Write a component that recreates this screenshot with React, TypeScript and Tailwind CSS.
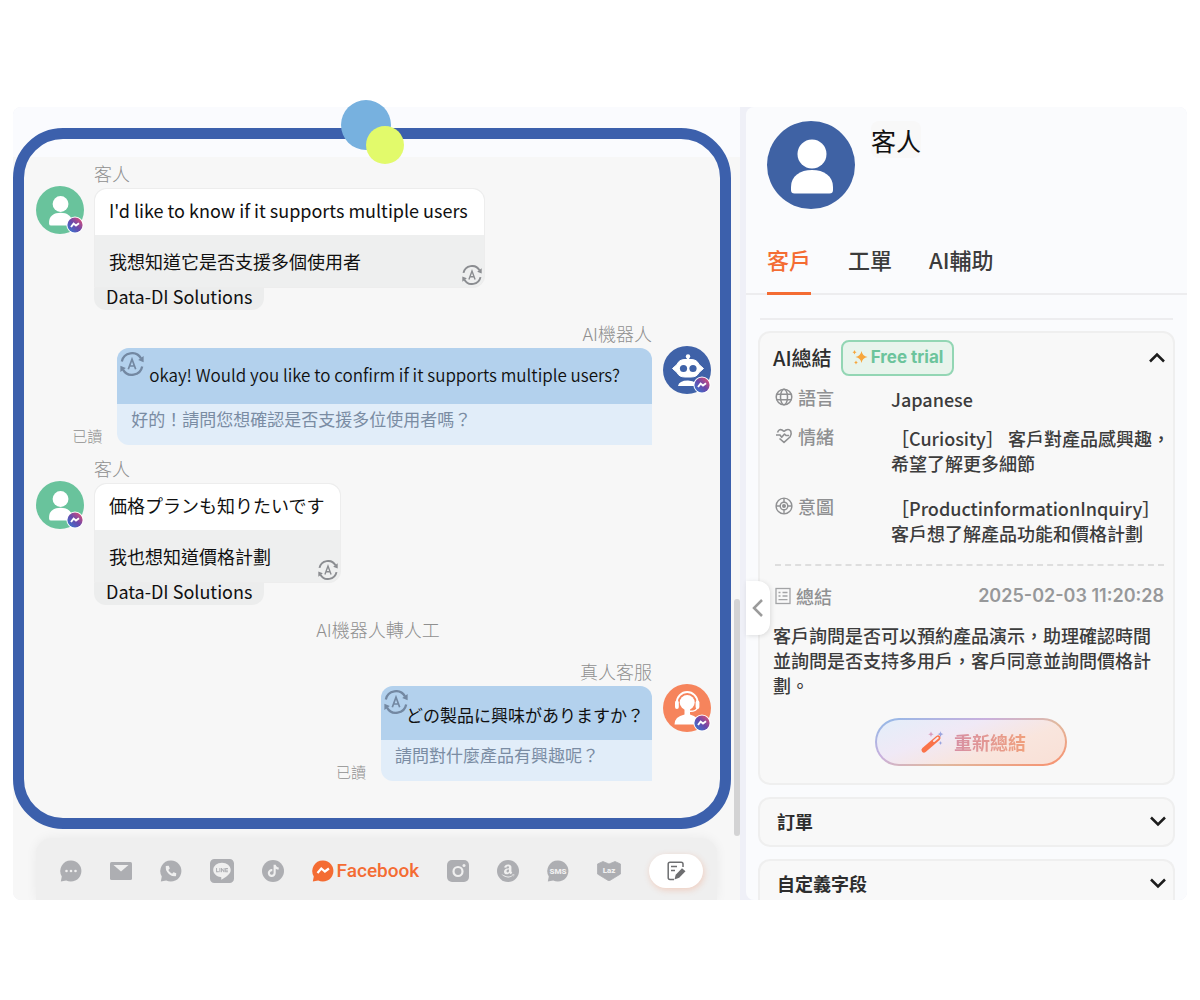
import type { ReactNode } from 'react';
import { FaAmazon, FaLine, FaPhoneAlt, FaTiktok } from 'react-icons/fa';

type IconProps = { className?: string };

/* ---------- icons ---------- */

function TranslateIcon({ className }: IconProps) {
  return (
    <svg viewBox="0 0 24 24" fill="none" stroke="currentColor" className={className}>
      <path d="M1.800 9.500A10.400 10.400 0 0 1 21 6.400" strokeWidth="2.300" />
      <path d="M22.200 14.500A10.400 10.400 0 0 1 3 17.600" strokeWidth="2.300" />
      <path d="M23.600 4v6.200l-5.400-2.200z" fill="currentColor" stroke="none" />
      <path d="M.4 20v-6.200l5.400 2.200z" fill="currentColor" stroke="none" />
      <path d="M8.300 17.300 12 7.200l3.700 10.100M9.500 14h5" strokeWidth="1.700" />
    </svg>
  );
}

function MessengerBadge() {
  return (
    <svg viewBox="0 0 18 18" className="absolute right-0 bottom-0 size-[18px]">
      <defs>
        <linearGradient id="messenger" x1="0" y1="1" x2="1" y2="0">
          <stop offset="0" stopColor="#2f7fd6" />
          <stop offset="0.5" stopColor="#6a48ab" />
          <stop offset="1" stopColor="#f2506d" />
        </linearGradient>
      </defs>
      <circle cx="9" cy="9" r="8.600" fill="#fff" />
      <circle cx="9" cy="9" r="7.600" fill="url(#messenger)" />
      <path d="m5 11 2.600-3.400 2.400 2 3-2.300" fill="none" stroke="#fff" strokeWidth="1.900" />
    </svg>
  );
}

function PersonIcon({ className }: IconProps) {
  return (
    <svg viewBox="0 0 88 88" fill="#fff" className={className}>
      <circle cx="45" cy="33" r="14.500" />
      <path d="M24 69V66C24 55 33 49 45 49s21 6 21 17v3q0 3.500-3.500 3.500h-35Q24 72.500 24 69Z" />
    </svg>
  );
}

function RobotIcon() {
  return (
    <svg viewBox="0 0 48 48" className="size-full" fill="#fff">
      <circle cx="25" cy="10.500" r="2.200" />
      <path d="M24 11h2v5h-2z" />
      <path d="M14 18.500q2-5 8-5h6q6 0 8 5l4.500 4-4.500 4q-2 4.500-8 4.500h-6q-6 0-8-4.500l-4.500-4Z" stroke="#fff" strokeLinejoin="round" />
      <circle cx="20.500" cy="22.500" r="3.600" fill="#3f62a8" />
      <circle cx="30" cy="22.500" r="3.600" fill="#3f62a8" />
      <path d="M15 40q1-5.500 10-5.500 5 0 8 2.500v3Z" />
    </svg>
  );
}

function AgentIcon() {
  return (
    <svg viewBox="0 0 48 48" className="size-full">
      <path d="M13.800 18.500a10.400 10.400 0 0 1 20.800 0" fill="none" stroke="#fff" strokeWidth="2" />
      <rect x="12" y="16.500" width="3.800" height="8.500" rx="1.900" fill="#fff" />
      <rect x="32.600" y="16.500" width="3.800" height="8.500" rx="1.900" fill="#fff" />
      <path d="M34.500 24q-2 3.800-8.500 3.200" fill="none" stroke="#fff" strokeWidth="1.600" />
      <circle cx="24.200" cy="18.500" r="7.500" fill="#fff" />
      <path d="M21.500 24h5.500v6.500q9 2 9 10H11.500q0-8 10-10Z" fill="#fff" />
    </svg>
  );
}

function ChatBubble({ children, className }: { children?: ReactNode; className?: string }) {
  return (
    <svg viewBox="0 0 22 22" className={className}>
      <path d="M11 .5a10.500 10.500 0 1 1-4.800 19.900L.8 21.600l1-5.200A10.500 10.500 0 0 1 11 .5Z" fill="currentColor" />
      {children}
    </svg>
  );
}

function GlobeIcon({ className }: IconProps) {
  return (
    <svg viewBox="0 0 18 18" fill="none" stroke="currentColor" strokeWidth="1.500" className={className}>
      <circle cx="9" cy="9" r="7.800" />
      <ellipse cx="9" cy="9" rx="3.500" ry="7.800" />
      <path d="M1.800 6.300h14.400M1.800 11.700h14.400" />
    </svg>
  );
}

function MoodIcon({ className }: IconProps) {
  return (
    <svg viewBox="0 0 18 18" fill="none" stroke="currentColor" strokeWidth="1.600" strokeLinejoin="round" className={className}>
      <path d="M2.500 5.500Q4 1.500 7 3l2 1.300L11 3q3-1.400 4.800 1.200Q17 7 15 10l-6 5.300L4.500 11.500" />
      <path d="M1 8h4l1.700 2.300L9.500 7 11 8.500h3" />
    </svg>
  );
}

function TargetIcon({ className }: IconProps) {
  return (
    <svg viewBox="0 0 18 18" fill="none" stroke="currentColor" strokeWidth="1.400" className={className}>
      <circle cx="9" cy="9" r="7.900" />
      <circle cx="9" cy="9" r="3.800" />
      <circle cx="9" cy="9" r="1.300" fill="currentColor" />
      <path d="M9 1v4M9 13v4M1 9h4M13 9h4" />
    </svg>
  );
}

function ListIcon({ className }: IconProps) {
  return (
    <svg viewBox="0 0 16 18" fill="none" stroke="currentColor" strokeWidth="1.300" className={className}>
      <rect x="1" y="1.500" width="14" height="15" />
      <path d="M3.500 5.500h2M3.500 9h2M7.500 5.500h5M7.500 9h5M3.500 12.700h9" />
    </svg>
  );
}

function SparklesIcon({ className }: IconProps) {
  return (
    <svg viewBox="0 0 16 16" fill="#f7a63c" className={className}>
      <path d="M9.500 2q.8 5 6 6-5.200 1-6 6-.8-5-6-6 5.200-1 6-6Z" />
      <path d="M2.500 1q.3 2 2 2.300Q2.800 3.600 2.500 5.500 2.200 3.600.5 3.300 2.200 3 2.500 1ZM4 11.500q.3 1.700 1.800 2Q4.300 13.800 4 15.500q-.3-1.700-1.800-2 1.500-.3 1.800-2Z" />
    </svg>
  );
}

function WandIcon({ className }: IconProps) {
  return (
    <svg viewBox="0 0 24 24" className={className}>
      <path d="M4 20 18 8" stroke="#fa7349" strokeWidth="5" strokeLinecap="round" />
      <path d="m14 11 3.800-3.200" stroke="#f6e8ee" strokeWidth="2" strokeLinecap="round" />
      <path d="M11 1.500q.3 2.500 2.700 2.800Q11.300 4.600 11 7q-.3-2.400-2.700-2.700Q10.700 4 11 1.500Z" fill="#d99bbb" />
      <path d="M20.500 1q.3 2.800 3 3-2.700.3-3 3-.3-2.700-3-3 2.700-.2 3-3ZM20.500 11q.2 1.800 2 2-1.800.2-2 2-.2-1.800-2-2 1.800-.2 2-2Z" fill="#9aa4de" />
    </svg>
  );
}

function Chevron({ d, className }: { d: string; className?: string }) {
  return (
    <svg viewBox="0 0 18 18" fill="none" stroke="currentColor" className={className}>
      <path d={d} />
    </svg>
  );
}

/* ---------- chat ---------- */

function Avatar({ className, children }: { className: string; children: ReactNode }) {
  return (
    <div className={`relative mt-[22px] size-12 shrink-0 rounded-full ${className}`}>
      {children}
      <MessengerBadge />
    </div>
  );
}

function SenderName({ children }: { children: ReactNode }) {
  return <p className="pb-[6px] text-lg leading-[18px] font-light text-[#8f8f8f]">{children}</p>;
}

function GuestMessage({ text, translation }: { text: string; translation: string }) {
  return (
    <li className="flex gap-[10px]">
      <Avatar className="bg-[#69c39c]">
        <PersonIcon className="size-full" />
      </Avatar>
      <div className="flex flex-col items-start">
        <SenderName>客人</SenderName>
        <div className="rounded-xl rounded-bl-none border border-[#ededed] bg-[#eeefef]">
          <p className="rounded-t-xl bg-white pt-[9px] pr-4 pb-[13px] pl-[14px] text-lg leading-6">{text}</p>
          <div className="flex items-end justify-between pt-[14px] pr-[2px] pb-[2px] pl-[14px]">
            <p className="pb-3 text-lg leading-6">{translation}</p>
            <TranslateIcon className="size-5 text-[#8b8d91]" />
          </div>
        </div>
        <p className="h-[22px] rounded-b-xl bg-[#eceded] px-3 text-lg leading-4">Data-DI Solutions</p>
      </div>
    </li>
  );
}

interface ReplyProps {
  name: string;
  text: string;
  translation: string;
  textClass: string;
  avatar: ReactNode;
}

function ReplyMessage({ name, text, translation, textClass, avatar }: ReplyProps) {
  return (
    <li className="flex justify-end gap-[11px]">
      <span className="self-end pr-1 pb-[1px] text-[15px] leading-4 font-light text-[#8f8f8f]">已讀</span>
      <div className="flex flex-col items-end">
        <SenderName>{name}</SenderName>
        <div className="relative overflow-hidden rounded-t-xl rounded-bl-xl bg-[#e1edf9]">
          <TranslateIcon className="absolute top-1 left-[3px] size-6 text-[#7388a2]" />
          <p className={`bg-[#b3d1ed] text-[17px] leading-6 ${textClass}`}>{text}</p>
          <p className="px-[14px] pt-[3px] pb-[14px] text-[17px] leading-6 text-[#7a8ca3]">{translation}</p>
        </div>
      </div>
      {avatar}
    </li>
  );
}

function ChannelButton({ label, children }: { label: string; children: ReactNode }) {
  return (
    <button type="button" aria-label={label} className="shrink-0">
      {children}
    </button>
  );
}

function ChannelBar() {
  return (
    <div className="overflow-hidden px-[23px] pt-[9px]">
      <div className="flex items-center justify-between rounded-t-2xl bg-[#efefef] pt-4 pr-[14px] pb-3 pl-6 text-[#adaeb2] shadow-[0_0_12px_rgba(0,0,0,0.06)]">
        <ChannelButton label="Chat">
          <ChatBubble className="size-[22px]">
            <g fill="#efefef">
              <circle cx="6.500" cy="11" r="1.300" />
              <circle cx="11" cy="11" r="1.300" />
              <circle cx="15.500" cy="11" r="1.300" />
            </g>
          </ChatBubble>
        </ChannelButton>
        <ChannelButton label="Email">
          <svg viewBox="0 0 22 18" className="h-[18px] w-[22px]">
            <rect width="22" height="18" rx="1.500" fill="currentColor" />
            <path d="M3.500 3h15L11 9.500Z" fill="#efefef" />
          </svg>
        </ChannelButton>
        <ChannelButton label="WhatsApp">
          <ChatBubble className="size-[22px]">
            <FaPhoneAlt x="5.500" y="5.500" size="11" color="#efefef" />
          </ChatBubble>
        </ChannelButton>
        <ChannelButton label="LINE">
          <FaLine className="h-7 w-6" />
        </ChannelButton>
        <ChannelButton label="TikTok">
          <svg viewBox="0 0 22 22" className="size-[22px]">
            <circle cx="11" cy="11" r="11" fill="currentColor" />
            <FaTiktok x="5" y="4.500" size="12.500" color="#efefef" />
          </svg>
        </ChannelButton>
        <button type="button" className="flex items-center gap-[3px] font-[Roboto] text-[19px] leading-6 font-medium text-[#f46c33]">
          <ChatBubble className="size-[22px]">
            <path d="m5.500 13 3.800-4.500 3.600 3 4-3" fill="none" stroke="#fff" strokeWidth="2.200" />
          </ChatBubble>
          Facebook
        </button>
        <ChannelButton label="Instagram">
          <svg viewBox="0 0 22 22" className="size-[22px]">
            <rect width="22" height="22" rx="5" fill="currentColor" />
            <circle cx="11" cy="11.500" r="4.500" fill="none" stroke="#efefef" strokeWidth="2.200" />
            <circle cx="17" cy="5.500" r="1.500" fill="#efefef" />
          </svg>
        </ChannelButton>
        <ChannelButton label="Amazon">
          <svg viewBox="0 0 22 22" className="size-[22px]">
            <circle cx="11" cy="11" r="11" fill="currentColor" />
            <FaAmazon x="3.500" y="3.500" size="15" color="#efefef" />
          </svg>
        </ChannelButton>
        <ChannelButton label="SMS">
          <ChatBubble className="size-[22px]">
            <text x="11" y="13.500" textAnchor="middle" fill="#efefef" className="font-[Roboto] text-[8px] font-black">
              SMS
            </text>
          </ChatBubble>
        </ChannelButton>
        <ChannelButton label="Lazada">
          <svg viewBox="0 0 24 20" className="h-5 w-6">
            <path
              d="M6 .5 12 3 18 .5l5.500 2.500v10L12 20 .5 13V3Z"
              fill="currentColor"
              stroke="currentColor"
              strokeWidth=".8"
              strokeLinejoin="round"
            />
            <text x="12" y="12" textAnchor="middle" fill="#efefef" className="font-[Roboto] text-[8px] font-black">
              Laz
            </text>
          </svg>
        </ChannelButton>
        <button
          type="button"
          aria-label="Note"
          className="flex h-[34px] w-[54px] items-center justify-center rounded-full bg-white text-[#6d6e70] shadow-[1px_2px_6px_rgba(244,108,51,0.25)]"
        >
          <svg viewBox="0 0 20 20" className="size-5" fill="none" stroke="currentColor" strokeWidth="1.500">
            <path d="M17 6V3q0-1.800-1.800-1.800H4Q2.200 1.200 2.200 3v13.500q0 2 1.800 2h4" />
            <path d="M5 5.500h6M5 9.500h4" />
            <path d="m8.500 18.500 1.200-4.700 6.300-6.600 3.500 3-6.300 6.600Z" fill="currentColor" stroke="none" />
          </svg>
        </button>
      </div>
    </div>
  );
}

function ChatPanel() {
  return (
    <section className="relative flex min-w-0 flex-col rounded-l-lg bg-[linear-gradient(#fafbfe_50px,#f7f7f7_50px)]">
      <div className="relative mt-[21px] mr-[9px] rounded-[50px] border-[11px] border-[#3c60ac] pt-[25px] pr-[9px] pb-[37px] pl-3">
        <span className="absolute -top-[39px] left-[317px] size-[50px] rounded-full bg-[#77b1df]" />
        <span className="absolute -top-[13px] left-[342px] size-[38px] rounded-full bg-[#e2fa6b]" />
        <ul className="flex flex-col gap-[14px]">
          <GuestMessage text="I'd like to know if it supports multiple users" translation="我想知道它是否支援多個使用者" />
          <ReplyMessage
            name="AI機器人"
            text="okay! Would you like to confirm if it supports multiple users?"
            translation="好的！請問您想確認是否支援多位使用者嗎？"
            textClass="px-8 pt-[15px] pb-[17px] font-[350]"
            avatar={
              <Avatar className="bg-[#3f62a8]">
                <RobotIcon />
              </Avatar>
            }
          />
          <GuestMessage text="価格プランも知りたいです" translation="我也想知道價格計劃" />
          <li className="pb-[9px] pl-[9px] text-center text-lg leading-5 font-light text-[#8f8f8f]">AI機器人轉人工</li>
          <ReplyMessage
            name="真人客服"
            text="どの製品に興味がありますか？"
            translation="請問對什麼產品有興趣呢？"
            textClass="pt-[17px] pr-2 pb-[13px] pl-[25px]"
            avatar={
              <Avatar className="bg-[#f6845c]">
                <AgentIcon />
              </Avatar>
            }
          />
        </ul>
      </div>
      <ChannelBar />
      <span className="absolute right-0 bottom-16 h-[237px] w-[6px] rounded-full bg-[#d3d3d4]" />
    </section>
  );
}

/* ---------- customer ---------- */

function SummaryRow({ icon, label, children }: { icon: ReactNode; label: string; children: ReactNode }) {
  return (
    <div className="flex">
      <dt className="flex w-[116px] shrink-0 items-center gap-[5px] self-start text-lg leading-6 font-medium text-[#8f9092]">
        {icon}
        {label}
      </dt>
      <dd className="pt-[2px] text-lg leading-[25px] font-medium text-[#3c3c3c]">{children}</dd>
    </div>
  );
}

function CollapsedCard({ title, className }: { title: string; className: string }) {
  return (
    <button
      type="button"
      className={`flex w-full items-center justify-between border-2 border-[#efefef] bg-[#f8f8f8] pr-[6px] pl-[17px] text-left text-lg leading-6 font-bold text-[#2d2d2d] ${className}`}
    >
      {title}
      <Chevron d="m2 5.500 7 7 7-7" className="size-[18px] stroke-[2.5] text-[#1c1c1c]" />
    </button>
  );
}

function CustomerPanel() {
  return (
    <aside className="relative flex flex-col rounded-lg bg-[#fafbfd]">
      <header className="flex items-start gap-4 px-[21px] pt-[14px]">
        <div className="size-[88px] shrink-0 rounded-full bg-[#3f62a4]">
          <PersonIcon className="size-full" />
        </div>
        <h1 className="rounded-lg bg-[#f8f8f8] pt-[1px] text-[25px] leading-9">客人</h1>
      </header>
      <nav className="mt-9 flex gap-[37px] border-b-2 border-[#ededef] px-[21px] text-[22px] leading-7 font-medium text-[#3c3c3c]">
        <a href="#customer" className="-mb-[2px] border-b-[3px] border-[#f46c33] pb-[19px] text-[#f46c33]">
          客戶
        </a>
        <a href="#tickets">工單</a>
        <a href="#ai">AI輔助</a>
      </nav>
      <hr className="mx-[14px] mt-[23px] border-t-2 border-[#ededef]" />

      <div className="flex flex-col gap-3 px-3 pt-[11px]">
        <section className="rounded-xl border-2 border-[#efefef] bg-[#f8f8f8] px-[13px] pt-[7px] pb-[17px]">
          <div className="flex items-center">
            <h2 className="text-xl leading-6 font-medium text-[#2d2d2d]">AI總結</h2>
            <span className="ml-[9px] flex h-9 items-center gap-[3px] rounded-lg border-2 border-[#93d6b4] bg-[#e8f4ec] px-[9px] pb-[3px] font-[Inter] text-[17px] leading-6 font-bold text-[#6cc49c]">
              <SparklesIcon className="size-4" />
              Free trial
            </span>
            <button type="button" aria-label="收起" className="-mr-[6px] ml-auto">
              <Chevron d="m2 12.500 7-7 7 7" className="size-[18px] stroke-[2.5] text-[#1c1c1c]" />
            </button>
          </div>
          <dl className="-mr-3 flex flex-col pt-[9px] pl-[2px]">
            <div className="pb-3">
              <SummaryRow icon={<GlobeIcon className="size-[18px]" />} label="語言">
                Japanese
              </SummaryRow>
            </div>
            <div className="pb-[18px]">
              <SummaryRow icon={<MoodIcon className="size-[18px]" />} label="情緒">
                ［Curiosity］ 客戶對產品感興趣，
                <br />
                希望了解更多細節
              </SummaryRow>
            </div>
            <SummaryRow icon={<TargetIcon className="size-[18px]" />} label="意圖">
              ［ProductinformationInquiry］
              <br />
              客戶想了解產品功能和價格計劃
            </SummaryRow>
          </dl>
          <div className="-mr-1 mt-[18px] ml-[2px] flex items-center border-t-2 border-dashed border-[#dedede] pt-[18px]">
            <ListIcon className="h-[18px] w-4 text-[#a3a4a6]" />
            <h3 className="pl-[5px] text-lg leading-6 font-medium text-[#8f9092]">總結</h3>
            <time className="ml-auto font-[Inter] text-lg leading-6 font-semibold text-[#97989a]">2025-02-03 11:20:28</time>
          </div>
          <p className="mt-[15px] pr-2 text-lg leading-[25px] font-medium text-[#3c3c3c]">
            客戶詢問是否可以預約產品演示，助理確認時間並詢問是否支持多用戶，客戶同意並詢問價格計劃。
          </p>
          <div className="flex justify-center pt-5 pl-[9px]">
            <button
              type="button"
              className="flex h-12 w-48 rounded-full bg-[linear-gradient(160deg,#8fb9e8,#c9b0dd_35%,#e0b9a0_60%,#f98f6c)] p-[2px]"
            >
              <span className="flex size-full items-center justify-center gap-[10px] rounded-full bg-[linear-gradient(160deg,#e3eefa,#f0e9f6_35%,#f9e5dd_65%,#f9e0d6)] pl-1">
                <WandIcon className="size-6" />
                <span className="bg-linear-to-r from-[#d78fa3] to-[#f0a07c] bg-clip-text text-lg leading-6 font-bold text-transparent">
                  重新總結
                </span>
              </span>
            </button>
          </div>
        </section>
        <CollapsedCard title="訂單" className="h-[50px] rounded-xl pb-[2px]" />
        <CollapsedCard title="自定義字段" className="h-[41px] rounded-t-xl border-b-0 pt-1" />
      </div>

      <button
        type="button"
        aria-label="收合"
        className="absolute top-[474px] left-0 flex h-[54px] w-6 items-center justify-center rounded-r-xl bg-white text-[#9b9b9b] shadow-[1px_1px_5px_rgba(0,0,0,0.12)]"
      >
        <Chevron d="M13 1 5 9l8 8" className="size-[18px] stroke-[2.5]" />
      </button>
    </aside>
  );
}

export default function App() {
  return (
    <main className="min-h-screen bg-white px-[13px] pt-[107px] pb-12 font-['Noto_Sans_CJK_TC',sans-serif] text-[#101010]">
      <div className="grid grid-cols-[minmax(0,1fr)_441px] gap-x-[6px] rounded-lg bg-[#eff0f7]">
        <ChatPanel />
        <CustomerPanel />
      </div>
    </main>
  );
}
